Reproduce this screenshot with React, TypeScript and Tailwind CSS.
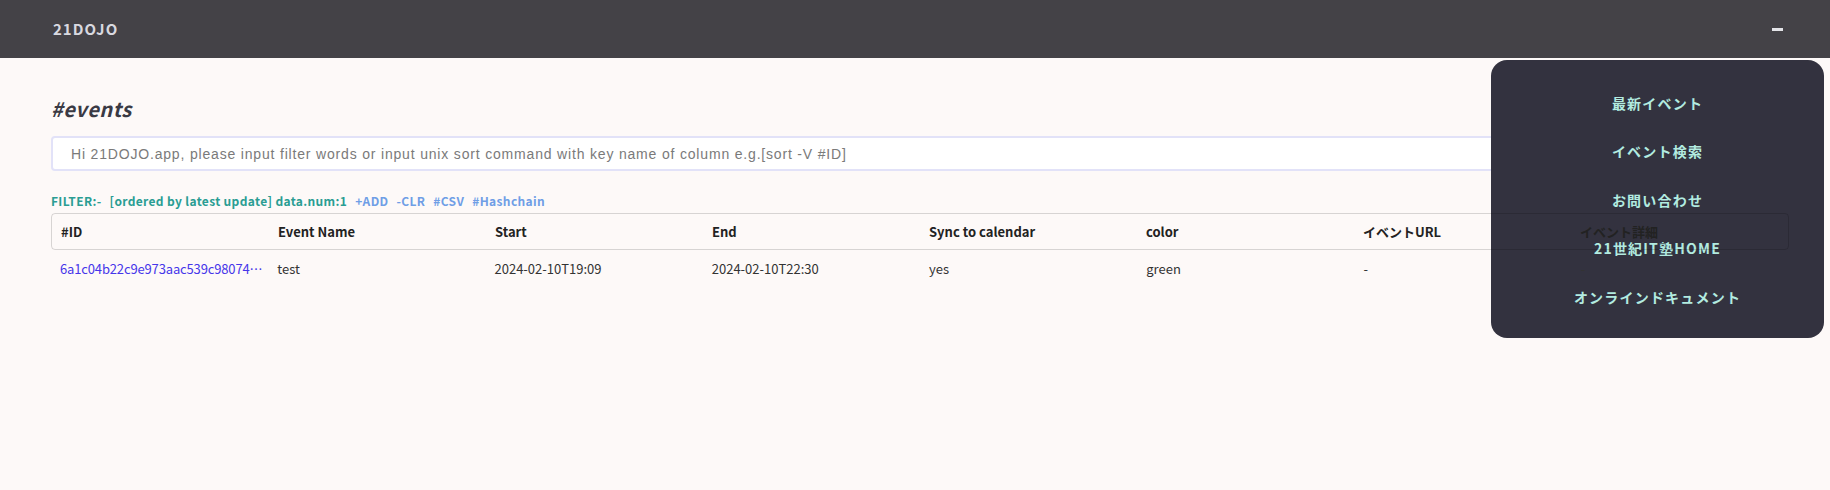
import React from 'react';

const COLUMNS = ['#ID', 'Event Name', 'Start', 'End', 'Sync to calendar', 'color', 'イベントURL', 'イベント詳細'];

const ROWS = [
  {
    id: '6a1c04b22c9e973aac539c98074e2b51d7a0c3f9',
    name: 'test',
    start: '2024-02-10T19:09',
    end: '2024-02-10T22:30',
    sync: 'yes',
    color: 'green',
    url: '-',
    detail: '-',
  },
];

const MENU = ['最新イベント', 'イベント検索', 'お問い合わせ', '21世紀IT塾HOME', 'オンラインドキュメント'];

export default function App() {
  return (
    <div className="relative min-h-[490px] bg-[#fdf9f8] font-['Noto_Sans_CJK_JP','Noto_Sans',sans-serif]">
      {/* Top bar */}
      <header className="flex h-[58px] items-center justify-between bg-[#444247] pl-[53px] pr-[47px]">
        <span className="text-[15px] font-bold tracking-[1px] text-[#d9d9e0]">21DOJO</span>
        <button className="flex h-[20px] w-[12px] items-center justify-center">
          <span className="block h-[3px] w-[11px] bg-[#e4e4e8]" />
        </button>
      </header>

      <main className="pl-[51px] pr-[41px] pt-[36px]">
        <h1 className="text-[20px] font-bold italic leading-[30px] tracking-[0.5px] text-[#3a3a44]">#events</h1>

        <input
          className="mt-[12px] h-[35px] w-full rounded-[4px] border-2 border-[#e2e2f8] bg-white px-[18px] font-['Liberation_Sans',Arial,sans-serif] text-[14px] tracking-[0.82px] text-[#555] outline-none placeholder:text-[#7a7a7a]"
          placeholder="Hi 21DOJO.app, please input filter words or input unix sort command with key name of column e.g.[sort -V #ID]"
        />

        <div className="mt-[20px] flex h-[20px] items-center gap-[8px] text-[12px] font-bold tracking-[0.35px]">
          <span className="text-[#2a9d93]">FILTER:-</span>
          <span className="text-[#2a9d93]">[ordered by latest update] data.num:1</span>
          <span className="text-[#6f9ee6]">+ADD</span>
          <span className="text-[#6f9ee6]">-CLR</span>
          <span className="text-[#6f9ee6]">#CSV</span>
          <span className="text-[#6f9ee6]">#Hashchain</span>
        </div>

        {/* Table */}
        <div className="relative z-20 mt-[2px] text-[13px]">
          <div className="grid h-[37px] grid-cols-8 items-center rounded-[4px] border border-black/15">
            {COLUMNS.map((c) => (
              <div key={c} className="px-[9px] font-bold text-[#222]">
                {c}
              </div>
            ))}
          </div>
          {ROWS.map((r) => (
            <div key={r.id} className="grid h-[38px] grid-cols-8 items-center text-[#333]">
              <div className="truncate pl-[9px] pr-[4px] tracking-[-0.15px] text-[#4636ea]">{r.id}</div>
              <div className="px-[9px]">{r.name}</div>
              <div className="px-[9px]">{r.start}</div>
              <div className="px-[9px]">{r.end}</div>
              <div className="px-[9px]">{r.sync}</div>
              <div className="px-[9px]">{r.color}</div>
              <div className="px-[9px]">{r.url}</div>
              <div className="px-[9px]">{r.detail}</div>
            </div>
          ))}
        </div>
      </main>

      {/* Drop-down menu */}
      <nav className="absolute right-[6px] top-[60px] z-10 flex w-[333px] flex-col rounded-[16px] bg-[#33323f] pb-[16px] pt-[19px]">
        {MENU.map((m) => (
          <a
            key={m}
            className="flex h-[48.5px] items-center justify-center text-[14px] font-bold tracking-[1.2px] text-[#b2ebe0]"
          >
            {m}
          </a>
        ))}
      </nav>
    </div>
  );
}
